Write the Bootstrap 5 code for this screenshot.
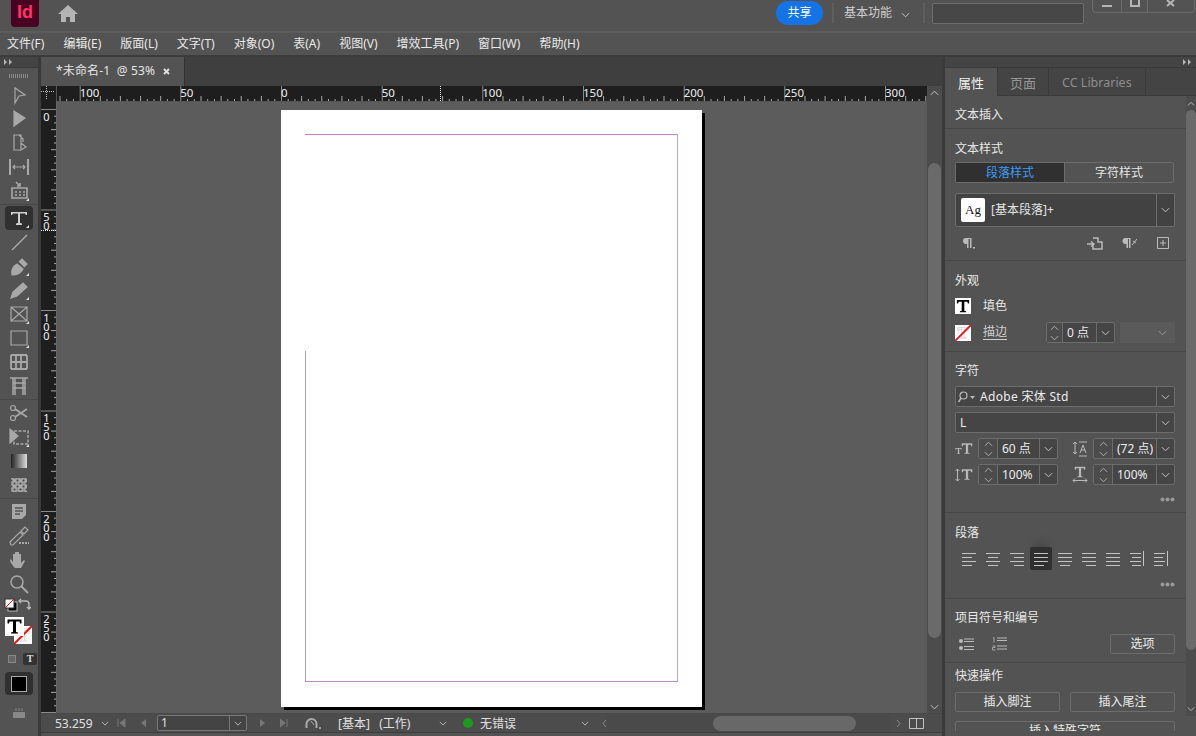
<!DOCTYPE html>
<html lang="zh-CN">
<head>
<meta charset="UTF-8" />
<title>Adobe InDesign</title>
<link href="https://cdn.jsdelivr.net/npm/bootstrap@5.3.0/dist/css/bootstrap.min.css" rel="stylesheet" />
<style>
  html, body { height: 100%; overflow: hidden; }
  body {
    background: #535353; color: #e4e4e4;
    font-family: "Noto Sans", "Noto Sans CJK SC", sans-serif; font-size: 12px; line-height: 1.2;
  }
  svg { display: block; flex: none; }
  .svg-defs { position: absolute; }
  .ic { fill: none; stroke: #a8a8a8; stroke-width: 1.2; }
  .app { width: 1196px; height: 736px; }
  /* spacing helpers for the fixed pixel gaps of this UI */
  .ml5 { margin-left: 5px; } .ml7 { margin-left: 7px; } .ml8 { margin-left: 8px; } .ml11 { margin-left: 11px; }
  .ml12 { margin-left: 12px; } .ml13 { margin-left: 13px; } .ml14 { margin-left: 14px; } .ml15 { margin-left: 15px; }
  .ml16 { margin-left: 16px; } .ml17 { margin-left: 17px; } .ml18 { margin-left: 18px; } .ml19 { margin-left: 19px; }
  .ml6 { margin-left: 6px; } .ml111 { margin-left: 111px; }
  .mt5 { margin-top: 5px; } .mt7 { margin-top: 7px; } .mt8 { margin-top: 8px; } .mt9 { margin-top: 9px; }
  .mt6 { margin-top: 6px; } .mt10 { margin-top: 10px; } .mt12 { margin-top: 12px; }
  /* title + menu */
  .title-bar { height: 31px; flex: none; }
  .id-logo {
    width: 28px; height: 27px; margin-left: 11px; background: #49021f; color: #ff3366; flex: none;
    border-radius: 0 0 4px 4px; font: 700 18px/25px "Liberation Sans", sans-serif; text-align: center;
  }
  .home-ic { margin: 5px 0 0 19px; }
  .share-btn {
    width: 47px; height: 24px; border-radius: 12px; background: #1473e6; color: #fff; font-size: 12px;
    border: 0; padding: 0; margin: 1px 0 0 698px;
  }
  .vsep { width: 2px; height: 20px; background: #5f5f5f; margin-top: 3px; }
  .vsep-a { margin-left: 9px; }
  .vsep-b { margin-left: 13px; }
  .workspace { margin: 5px 0 0 10px; width: 48px; color: #cfcfcf; line-height: 16px; white-space: nowrap; }
  .workspace-chev { margin: 12px 0 0 9px; }
  .search-box { width: 152px; height: 21px; background: #474747; border: 1px solid #6c6c6c; border-radius: 2px; margin: 3px 0 0 7px; }
  .win-btns { width: 103px; height: 13px; margin-left: 8px; border: 1px solid #6a6a6a; border-top: 0; border-radius: 0 0 4px 4px; }
  .win-btns > div { border-right: 1px solid #6a6a6a; }
  .win-btns > div:last-child { border-right: 0; }
  .win-min { width: 29px; }
  .win-max { width: 26px; }
  .win-close { width: 46px; }
  .menu-bar { height: 24px; flex: none; border-top: 2px solid #5c5c5c; padding-left: 7px; gap: 19px; box-shadow: 0 1px 0 #3c3c3c; }
  .menu-bar span { color: #e8e8e8; white-space: nowrap; }
  /* tool strip */
  .work { height: 680px; margin-top: 1px; border-top: 1px solid #3a3a3a; flex: none; }
  .tools { width: 38px; flex: none; background: #535353; }
  .strip-head { height: 11px; background: #444; border-bottom: 1px solid #3a3a3a; color: #b5b5b5; flex: none; }
  .grip { height: 4px; margin: 6px 9px 5px; background: repeating-linear-gradient(90deg, #8a8a8a 0 1px, transparent 1px 2px); flex: none; }
  .tool { height: 24px; flex: none; }
  .tool.on { background: #303030; border-radius: 4px; margin: 0 5px; }
  .tool-gap { height: 1px; background: #484848; margin: 1px 0 1px; flex: none; }
  .mini-row { padding: 2px 4px 0; height: 17px; }
  .swatch-row { height: 34px; margin-top: 4px; padding-left: 5px; }
  .mode-row { height: 16px; padding-left: 8px; gap: 7px; }
  .mode-t { width: 14px; height: 12px; background: #333; border-radius: 2px; color: #ddd; font: 700 10px/12px "Liberation Serif", serif; text-align: center; }
  .apply-box { height: 23px; margin: 5px 5px 0; background: #303030; border-radius: 4px; }
  .screen-mode { margin-top: 12px; }
  .divider-v { width: 3px; flex: none; background: #3a3a3a; }
  /* document */
  .doc { width: 901px; flex: none; }
  .doc-tabs { height: 29px; background: #3f3f3f; flex: none; }
  .doc-tab { width: 144px; background: #535353; padding-left: 15px; gap: 8px; border-right: 1px solid #333; color: #e4e4e4; letter-spacing: .15px; }
  .ruler-row { height: 15px; flex: none; }
  .ruler-corner { width: 16px; background: #1e1e1e; border-right: 1px solid #555; flex: none; }
  .ruler-h { width: 870px; background: #1e1e1e; flex: none; }
  .scroll-v { width: 15px; background: #4c4c4c; flex: none; }
  .scroll-mid { padding-top: 62px; }
  .flip { transform: scaleY(-1); }
  .doc-mid { height: 612px; flex: none; }
  .ruler-v { width: 16px; background: #1e1e1e; border-right: 1px solid #666; flex: none; height: 611px; }
  .ruler-v svg { overflow: visible; }
  .ruler-v text { text-orientation: upright; letter-spacing: -6px; }
  .canvas-area { width: 870px; background: #5c5c5c; position: relative; flex: none; border-top: 1px solid #555; }
  .page-sheet {
    position: absolute; left: 224px; top: 8px; width: 421px; height: 597px; background: #fff;
    box-shadow: 3px 3px 0 #000;
  }
  .guide-top { position: absolute; left: 24px; top: 24px; width: 373px; height: 1px; background: #c97fc2; }
  .guide-right { position: absolute; left: 396px; top: 24px; width: 1px; height: 548px; background: #c9a6c9; }
  .guide-bottom { position: absolute; left: 24px; top: 571px; width: 373px; height: 1px; background: #b98cc0; }
  .guide-left { position: absolute; left: 24px; top: 241px; width: 1px; height: 330px; background: #a59be0; }
  .thumb-v { width: 13px; height: 475px; margin: 0 auto; background: #6a6a6a; border-radius: 7px; flex: none; }
  .thumb-end { margin-top: 66px; }
  .status-bar { height: 20px; flex: none; background: #4c4c4c; color: #e0e0e0; border-top: 1px solid #484848; border-bottom: 1px solid #3e3e3e; white-space: nowrap; }
  .status-bar > span { padding-top: 2px; }
  .st-zoom { width: 46px; margin-left: 14px; }
  .page-pick { width: 90px; height: 16px; margin-left: 11px; border: 1px solid #777; border-radius: 2px; background: #444; }
  .page-pick span { width: 71px; padding-left: 3px; line-height: 14px; }
  .page-pick div { width: 17px; height: 14px; border-left: 1px solid #777; }
  .st-mode { width: 101px; margin-left: 16px; }
  .ok-dot { width: 10px; height: 10px; border-radius: 50%; background: #1c9a1c; margin-left: 16px; }
  .st-ok { width: 101px; margin-left: 7px; }
  .h-track { width: 283px; height: 18px; background: #4a4a4a; }
  .h-thumb { width: 143px; height: 15px; border-radius: 8px; background: #686868; margin-left: 106px; }
  /* right panel */
  .panel-wrap { width: 251px; flex: none; }
  .panel-tabs { height: 28px; background: #444; border-bottom: 1px solid #3a3a3a; flex: none; color: #969696; font-size: 13px; }
  .panel-tabs > div { border-right: 1px solid #3a3a3a; padding: 0 12px; height: 28px; line-height: 30px; white-space: nowrap; }
  .panel-tabs .act { background: #535353; color: #f0f0f0; margin-bottom: -1px; padding: 0 13px; }
  .panel-tabs .lib { font-size: 12.5px; color: #8e8e8e; padding: 0 13px; }
  .panel-body { width: 241px; height: 635px; overflow: hidden; flex: none; }
  .panel-scroll { width: 10px; background: #4c4c4c; flex: none; height: 620px; padding-top: 5px; }
  .panel-thumb { height: 540px; margin-top: 3px; background: #6a6a6a; border-radius: 5px; flex: none; }
  .panel-end { margin-top: 56px; }
  .sect { padding: 0 11px 0 10px; border-bottom: 1px solid #484848; }
  .sec-insert { height: 33px; padding-top: 12px; }
  .sec-style { height: 132px; padding-top: 13px; }
  .sec-look { height: 91px; padding-top: 13px; }
  .sec-char { height: 161px; padding-top: 12px; }
  .sec-para { height: 86px; padding-top: 13px; }
  .sec-list { height: 64px; padding-top: 12px; }
  .sec-quick { padding-top: 6px; border: 0; }
  .sect-title { line-height: 14px; color: #e8e8e8; }
  .seg { height: 21px; border: 1px solid #6c6c6c; border-radius: 2px; width: 219px; }
  .seg div { flex: 1; text-align: center; line-height: 20px; }
  .seg .act { background: #303030; color: #3d9bf5; border-right: 1px solid #6c6c6c; }
  .style-box { height: 34px; width: 220px; border: 1px solid #6c6c6c; border-radius: 2px; background: #424242; }
  .ag { width: 24px; height: 24px; background: #fff; color: #111; border-radius: 2px; margin: 0 6px 0 5px; font: 13px/23px "Liberation Serif", serif; text-align: center; flex: none; }
  .style-actions { padding: 0 5px 0 7px; }
  .fill-row { height: 16px; }
  .stroke-row { height: 21px; }
  .drop { width: 18px; border-left: 1px solid #6c6c6c; align-self: stretch; flex: none; }
  .inp { height: 21px; border: 1px solid #6c6c6c; border-radius: 2px; background: #454545; }
  .inp .arrows { width: 19px; border-right: 1px solid #6c6c6c; background: #4c4c4c; align-self: stretch; flex: none; }
  .inp .val { flex: 1; padding-left: 4px; white-space: nowrap; line-height: 19px; color: #ececec; }
  .w220 { width: 220px; }
  .w80 { width: 80px; }
  .w82 { width: 82px; }
  .w69 { width: 69px; margin-left: auto; margin-right: 5px; }
  .w69 .arrows { width: 16px; }
  .font-val { letter-spacing: .3px; }
  .search-ic { margin-left: 2px; }
  .ghost-sel { width: 55px; height: 21px; background: #5a5a5a; }
  .dim { opacity: .6; }
  .fill-link { text-decoration: underline; color: #cfcfcf; text-underline-offset: 3px; }
  .al-row { gap: 2px; padding-left: 3px; }
  .al-on { background: #303030; border-radius: 2px; box-shadow: 0 -8px 9px -5px #444; }
  .al-btn { width: 22px; height: 23px; }
  .plain-btn { height: 20px; border: 1px solid #6c6c6c; border-radius: 2px; background: transparent; color: #ececec; font-size: 12px; padding: 0; line-height: 18px; }
  .btn-opt { width: 65px; }
  .btn-half { width: 105px; }
  .btn-full { width: 220px; }
  .quick-row { gap: 10px; }
</style>
</head>
<body>
<svg class="svg-defs" width="0" height="0">
  <defs>
    <symbol id="chev" viewBox="0 0 10 6"><path d="M1 1l4 4 4-4" fill="none" stroke="#c4c4c4" stroke-width="1.1" /></symbol>
    <symbol id="updown" viewBox="0 0 10 17"><path d="M1 5l4-4 4 4M1 12l4 4 4-4" fill="none" stroke="#b8b8b8" stroke-width="1" /></symbol>
    <symbol id="bigT" viewBox="0 0 16 16"><path d="M1 5V1h14v4h-1.500L13 3H9.500v10.500L11.500 14v1h-7v-1l2-.5V3H3L2.500 5z" /></symbol>
    <symbol id="dots" viewBox="0 0 15 5"><circle cx="2.500" cy="2.500" r="2" fill="#999" /><circle cx="7.500" cy="2.500" r="2" fill="#999" /><circle cx="12.500" cy="2.500" r="2" fill="#999" /></symbol>
  </defs>
</svg>

<div class="app d-flex flex-column">
  <div class="title-bar d-flex align-items-start">
    <div class="id-logo">Id</div>
    <svg class="home-ic" width="20" height="17" viewBox="0 0 20 17"><path d="M10 0L0 9h3v8h5v-5h4v5h5V9h3z" fill="#b4b4b4" /></svg>
    <button class="share-btn" type="button">共享</button>
    <div class="vsep vsep-a"></div>
    <div class="workspace">基本功能</div>
    <svg class="workspace-chev" width="9" height="6"><use href="#chev" /></svg>
    <div class="vsep vsep-b"></div>
    <div class="search-box"></div>
    <div class="win-btns d-flex">
      <div class="win-min d-flex justify-content-center"><svg width="10" height="12"><rect y="5" width="10" height="2" fill="#b5b5b5" /></svg></div>
      <div class="win-max d-flex justify-content-center"><svg width="10" height="12"><rect x="1" y="-2" width="8" height="8" fill="none" stroke="#b5b5b5" stroke-width="2" /></svg></div>
      <div class="win-close d-flex justify-content-center"><svg width="10" height="12"><path d="M1 0l7 6M8 0L1 6" stroke="#b5b5b5" stroke-width="2" /></svg></div>
    </div>
  </div>

  <div class="menu-bar d-flex align-items-center">
    <span>文件(F)</span><span>编辑(E)</span><span>版面(L)</span><span>文字(T)</span><span>对象(O)</span><span>表(A)</span><span>视图(V)</span><span>增效工具(P)</span><span>窗口(W)</span><span>帮助(H)</span>
  </div>

  <div class="work d-flex">
    <div class="tools d-flex flex-column">
      <div class="strip-head ps-1 d-flex align-items-center"><svg width="9" height="6"><path d="M0 0l3 3-3 3zM5 0l3 3-3 3z" fill="#b5b5b5" /></svg></div>
      <div class="grip"></div>
      <div id="toolList" class="d-flex flex-column"></div>
    </div>
    <div class="divider-v"></div>

    <div class="doc d-flex flex-column">
      <div class="doc-tabs d-flex">
        <div class="doc-tab d-flex align-items-center"><span>*未命名-1&nbsp; @ 53%</span><svg width="7" height="7"><path d="M1 1l5 5M6 1L1 6" stroke="#ddd" stroke-width="2" /></svg></div>
      </div>
      <div class="ruler-row d-flex">
        <div class="ruler-corner"><svg width="15" height="15"><path d="M0 5.500h13M5.500 0v13" stroke="#bbb" stroke-dasharray="1 1" /></svg></div>
        <div class="ruler-h" id="rulerH"></div>
        <div class="scroll-v d-flex justify-content-center pt-1"><svg class="flip" width="9" height="6"><use href="#chev" /></svg></div>
      </div>
      <div class="doc-mid d-flex">
        <div class="ruler-v" id="rulerV"></div>
        <div class="canvas-area">
          <div class="page-sheet">
            <div class="guide-top"></div><div class="guide-right"></div><div class="guide-bottom"></div><div class="guide-left"></div>
          </div>
        </div>
        <div class="scroll-v scroll-mid d-flex flex-column">
          <div class="thumb-v"></div>
          <svg class="mx-auto thumb-end" width="9" height="6"><use href="#chev" /></svg>
        </div>
      </div>
      <div class="status-bar d-flex align-items-center">
        <span class="st-zoom">53.259</span>
        <svg width="8" height="5"><use href="#chev" /></svg>
        <svg class="ml8" width="9" height="8"><path d="M1 0v8M8 0v8L3 4z" fill="#777" stroke="#777" /></svg>
        <svg class="ml15" width="5" height="8"><path d="M5 0v8L0 4z" fill="#777" /></svg>
        <div class="page-pick d-flex"><span>1</span><div class="d-flex align-items-center justify-content-center"><svg width="8" height="5"><use href="#chev" /></svg></div></div>
        <svg class="ml13" width="5" height="8"><path d="M0 0v8l5-4z" fill="#777" /></svg>
        <svg class="ml15" width="8" height="8"><path d="M7 0v8M0 0v8l5-4z" fill="#777" stroke="#777" /></svg>
        <svg class="ml17" width="17" height="13"><path d="M1.500 11V7a5 5 0 0 1 10 0v4" fill="none" stroke="#aaa" stroke-width="2" /><path d="M6 4l3 4" stroke="#aaa" /><rect x="14" y="10" width="2" height="2" fill="#999" /></svg>
        <span class="st-mode">[基本]&nbsp;&nbsp;&nbsp;(工作)</span>
        <svg width="8" height="5"><use href="#chev" /></svg>
        <div class="ok-dot"></div>
        <span class="st-ok">无错误</span>
        <svg width="8" height="5"><use href="#chev" /></svg>
        <svg class="ml13" width="5" height="9"><path d="M4 1L1 4.500 4 8" fill="none" stroke="#888" /></svg>
        <div class="h-track d-flex align-items-center"><div class="h-thumb"></div></div>
        <svg class="ml6" width="5" height="9"><path d="M1 1l3 3.500L1 8" fill="none" stroke="#888" /></svg>
        <svg class="ml8" width="15" height="11"><path d="M.5.500h14v10H.5zM7.500.500v10" fill="none" stroke="#c0c0c0" /></svg>
      </div>
    </div>
    <div class="divider-v"></div>

    <div class="panel-wrap d-flex flex-column">
      <div class="strip-head d-flex align-items-center justify-content-end pe-1"><svg width="9" height="6"><path d="M0 0l3 3-3 3zM5 0l3 3-3 3z" fill="#b5b5b5" /></svg></div>
      <div class="panel-tabs d-flex">
        <div class="act">属性</div><div>页面</div><div class="lib">CC Libraries</div>
      </div>
      <div class="d-flex">
        <div class="panel-body">
          <section class="sect sec-insert"><div class="sect-title">文本插入</div></section>

          <section class="sect sec-style">
            <div class="sect-title">文本样式</div>
            <div class="seg d-flex mt6"><div class="act">段落样式</div><div>字符样式</div></div>
            <div class="style-box d-flex align-items-center mt10">
              <div class="ag">Ag</div>
              <span class="flex-fill">[基本段落]+</span>
              <div class="drop d-flex align-items-center justify-content-center"><svg width="9" height="6"><use href="#chev" /></svg></div>
            </div>
            <div class="style-actions d-flex align-items-center mt9">
              <svg width="14" height="12"><path d="M7.500 1H4a3 3 0 0 0 0 6h1v4h1.500V2H8v9h1.500V1z" fill="#bbb" /><rect x="11" y="10" width="2" height="1.500" fill="#bbb" /></svg>
              <svg class="ml111" width="17" height="14"><path d="M6 2h5v4h4v7H6v-4" fill="none" stroke="#bbb" stroke-width="1.500" /><path d="M0 8h6M4 5.500L7 8l-3 2.500" fill="none" stroke="#bbb" stroke-width="1.300" /></svg>
              <svg class="ml18" width="16" height="12"><path d="M6.500 1H3.500a3 3 0 0 0 0 6h1v4H6V2h1v9h1.500V1z" fill="#bbb" /><path d="M10 8l5-6M11 4l3 2" stroke="#bbb" /></svg>
              <svg class="ml19" width="12" height="12"><path d="M.5.500h11v11H.5zM3 6h6M6 3v6" fill="none" stroke="#bbb" /></svg>
            </div>
          </section>

          <section class="sect sec-look">
            <div class="sect-title">外观</div>
            <div class="fill-row d-flex align-items-center mt10">
              <svg width="16" height="16"><rect width="16" height="16" fill="#fff" /><use href="#bigT" width="14" height="14" x="1" y="1" fill="#000" /></svg>
              <span class="ml12">填色</span>
            </div>
            <div class="stroke-row d-flex align-items-center mt8">
              <svg width="16" height="16"><rect width="16" height="16" fill="#fff" /><use href="#bigT" width="12" height="12" x="2" y="2" fill="none" stroke="#bbb" stroke-width=".8" /><path d="M0 16L16 0" stroke="#e11" stroke-width="1.800" /></svg>
              <span class="fill-link ml12">描边 </span>
              <div class="inp d-flex align-items-center w69">
                <div class="arrows d-flex align-items-center justify-content-center"><svg width="9" height="16"><use href="#updown" /></svg></div>
                <div class="val">0 点</div>
                <div class="drop d-flex align-items-center justify-content-center"><svg width="9" height="6"><use href="#chev" /></svg></div>
              </div>
              <div class="ghost-sel d-flex align-items-center justify-content-end pe-2"><svg class="dim" width="9" height="6"><use href="#chev" /></svg></div>
            </div>
          </section>

          <section class="sect sec-char">
            <div class="sect-title">字符</div>
            <div class="inp w220 d-flex align-items-center mt8">
              <svg class="search-ic" width="18" height="12"><circle cx="5.500" cy="4.500" r="3.500" fill="none" stroke="#bbb" stroke-width="1.200" /><path d="M3 7L.5 11" stroke="#bbb" stroke-width="1.500" /><path d="M12 5h5l-2.500 3z" fill="#bbb" /></svg>
              <div class="val font-val">Adobe 宋体 Std</div>
              <div class="drop d-flex align-items-center justify-content-center"><svg width="9" height="6"><use href="#chev" /></svg></div>
            </div>
            <div class="inp w220 d-flex align-items-center mt5">
              <div class="val">L</div>
              <div class="drop d-flex align-items-center justify-content-center"><svg width="9" height="6"><use href="#chev" /></svg></div>
            </div>
            <div class="d-flex align-items-center mt5">
              <svg width="18" height="14" viewBox="0 0 18 14"><use href="#bigT" x="6" y="0" width="12" height="13" fill="#b8b8b8" /><use href="#bigT" x="0" y="5" width="7" height="8" fill="#b8b8b8" /></svg>
              <div class="inp d-flex align-items-center w80 ml5">
                <div class="arrows d-flex align-items-center justify-content-center"><svg width="9" height="16"><use href="#updown" /></svg></div>
                <div class="val">60 点</div>
                <div class="drop d-flex align-items-center justify-content-center"><svg width="9" height="6"><use href="#chev" /></svg></div>
              </div>
              <svg class="ml14" width="16" height="16"><path d="M3 1v12M1 3l2-2 2 2M1 11l2 2 2-2" fill="none" stroke="#b8b8b8" /><path d="M7 1h8M7 15h8" stroke="#b8b8b8" /><path d="M8 12l3-8 3 8M9 9h4" fill="none" stroke="#b8b8b8" /></svg>
              <div class="inp d-flex align-items-center w82 ml5">
                <div class="arrows d-flex align-items-center justify-content-center"><svg width="9" height="16"><use href="#updown" /></svg></div>
                <div class="val">(72 点)</div>
                <div class="drop d-flex align-items-center justify-content-center"><svg width="9" height="6"><use href="#chev" /></svg></div>
              </div>
            </div>
            <div class="d-flex align-items-center mt5">
              <svg width="18" height="14" viewBox="0 0 18 14"><path d="M2.500 1v12M.5 3l2-2 2 2M.5 11l2 2 2-2" fill="none" stroke="#b8b8b8" /><use href="#bigT" x="6" y="0" width="12" height="13" fill="#b8b8b8" /></svg>
              <div class="inp d-flex align-items-center w80 ml5">
                <div class="arrows d-flex align-items-center justify-content-center"><svg width="9" height="16"><use href="#updown" /></svg></div>
                <div class="val">100%</div>
                <div class="drop d-flex align-items-center justify-content-center"><svg width="9" height="6"><use href="#chev" /></svg></div>
              </div>
              <svg class="ml14" width="16" height="17"><use href="#bigT" x="2" y="0" width="12" height="12" fill="#b8b8b8" /><path d="M1 14.500h14M3 12.500l-2 2 2 2M13 12.500l2 2-2 2" fill="none" stroke="#b8b8b8" /></svg>
              <div class="inp d-flex align-items-center w82 ml5">
                <div class="arrows d-flex align-items-center justify-content-center"><svg width="9" height="16"><use href="#updown" /></svg></div>
                <div class="val">100%</div>
                <div class="drop d-flex align-items-center justify-content-center"><svg width="9" height="6"><use href="#chev" /></svg></div>
              </div>
            </div>
            <div class="d-flex justify-content-end mt12"><svg width="15" height="5"><use href="#dots" /></svg></div>
          </section>

          <section class="sect sec-para">
            <div class="sect-title">段落</div>
            <div class="al-row d-flex mt7" id="alignRow"></div>
            <div class="d-flex justify-content-end mt12"><svg width="15" height="5"><use href="#dots" /></svg></div>
          </section>

          <section class="sect sec-list">
            <div class="sect-title">项目符号和编号</div>
            <div class="d-flex align-items-center mt9">
              <svg class="ms-1" width="15" height="13"><circle cx="2" cy="3" r="2" fill="#bbb" /><circle cx="2" cy="10" r="2" fill="#bbb" /><path d="M5 1h10M5 3.500h10M5 8.500h10M5 11.500h10" stroke="#bbb" /></svg>
              <svg class="ml18" width="15" height="14"><path d="M1 1l1-.5v5M.5 9h2.500v1.500H.5V13H3.500" fill="none" stroke="#aaa" stroke-width=".9" /><path d="M5 1h10M5 3.500h10M5 9h10M5 12h10" stroke="#bbb" /></svg>
              <button class="plain-btn btn-opt ms-auto" type="button">选项</button>
            </div>
          </section>

          <section class="sect sec-quick">
            <div class="sect-title">快速操作</div>
            <div class="quick-row d-flex mt9">
              <button class="plain-btn btn-half" type="button">插入脚注</button>
              <button class="plain-btn btn-half" type="button">插入尾注</button>
            </div>
            <button class="plain-btn btn-full mt9" type="button">插入特殊字符</button>
          </section>
        </div>
        <div class="panel-scroll d-flex flex-column align-items-center">
          <svg class="flip" width="8" height="6"><use href="#chev" /></svg>
          <div class="panel-thumb w-100"></div>
          <svg class="panel-end" width="8" height="6"><use href="#chev" /></svg>
        </div>
      </div>
    </div>
  </div>
</div>

<script>
  // tool strip, rulers and align row are repetitive, so build them here
  const tri = '<path d="M22 22v-3l-3 3z" fill="#ddd" stroke="none"/>';
  const T = '<path d="M4 9V6h16v3h-1l-1-1.500h-5V17l2 .6V19H9v-1.400l2-.6V7.500H6L5 9z" fill="#cfcfcf" stroke="none"/>';
  const tools = [
    '<path d="M8 5v15l4-7 6-1z"/>',
    '<path d="M7 4v15l11-8z" fill="#a8a8a8"/>',
    '<path d="M14 12V4H7v15h7M12 4l4 4v3M14 12v7l5-3z"/>',
    '<path d="M3 4v16M21 4v16" stroke-width="2"/><path d="M6 12h12M8 10l-2 2 2 2M16 10l2 2-2 2"/>',
    '<path d="M5 9h15v10H5zM9 3l4 4M13 4v3h-3M8 13h2M12 13h2M16 13h2M8 16h2M12 16h2M16 16h2" stroke-width="1.600"/>' + tri,
    'sep',
    T + tri,
    '<path d="M5 20L20 5" stroke-width="1.500"/>',
    '<path d="M5 21c-1-6 1-9 5-11l6 5c-2 4-5 6-11 6zM12 8l3-3 5 5-3 3" fill="#a8a8a8"/>' + tri,
    '<path d="M4 20l2-6L16 5l4 4-10 9z" fill="#a8a8a8"/>' + tri,
    '<path d="M4 5h16v14H4zM4 5l16 14M20 5L4 19" stroke-width="1.200"/>' + tri,
    '<path d="M4 5h16v14H4z"/>' + tri,
    '<path d="M4 5h16M4 12h16M4 19h16M4 5v14M9 5v14M14 5v14M20 5v14" stroke-width="1.800"/>',
    '<path d="M3 4h18M8 4v17M16 4v17M6 4v17M18 4v17M6 9h12M6 14h12" stroke-width="1.500"/>',
    'sep',
    '<circle cx="6" cy="7" r="2.500"/><circle cx="6" cy="17" r="2.500"/><path d="M8 8l12 8M8 16l12-8" stroke-width="1.800"/>',
    '<path d="M3 4v14l8-7z" fill="#a8a8a8"/><path d="M7 6h14v13H7z" stroke-dasharray="3 1.500" stroke-width="1.500"/>' + tri,
    '<defs><linearGradient id="gr"><stop stop-color="#222"/><stop offset="1" stop-color="#ddd"/></linearGradient></defs><rect x="4" y="5" width="16" height="14" fill="url(#gr)" stroke="none"/>',
    '<defs><pattern id="ck" width="6" height="6" patternUnits="userSpaceOnUse"><rect width="6" height="6" fill="#444"/><rect width="3" height="3" fill="#aaa"/><rect x="3" y="3" width="3" height="3" fill="#888"/></pattern></defs><rect x="4" y="5" width="16" height="14" fill="url(#ck)" stroke="none"/>',
    'sep',
    '<path d="M5 4h14v11l-4 4H5z" fill="#a8a8a8" stroke="none"/><path d="M8 8h8M8 11h8M8 14h5" stroke="#535353" stroke-width="1.300"/>',
    '<path d="M4 21l-1-3L13 8l3 3L6 21zM14 7l4-4 3 3-4 4z"/><path d="M12 19h10" stroke-dasharray="2 1" stroke-width="2"/>',
    '<path d="M8 20c-2-2-5-6-5-8s2 0 3 2V6h2v6-8h2v8-8h2v8-6h2v9l3-3 1 1-4 7z" fill="#a8a8a8" stroke="none"/>',
    '<circle cx="10" cy="10" r="6" stroke-width="1.500"/><path d="M14 14l7 7" stroke-width="2"/>'
  ];
  const toolHtml = tools.map((t, i) => {
    if (t === 'sep') return '<div class="tool-gap"></div>';
    const on = i === 6 ? ' on' : '';
    return `<div class="tool${on} d-flex justify-content-center align-items-center"><svg class="ic" width="24" height="24" viewBox="0 0 24 24">${t}</svg></div>`;
  }).join('');
  const lower = `
    <div class="mini-row d-flex justify-content-between">
      <svg width="14" height="14"><rect x="4" y="4" width="9" height="9" fill="#000" stroke="#bbb"/><rect x="1" y="1" width="9" height="9" fill="#fff" stroke="#333"/><path d="M1 10L10 1" stroke="#e11"/></svg>
      <svg width="13" height="13" class="me-1"><path d="M1 3h7a3 3 0 0 1 3 3v5M3 1L1 3l2 2M9 9l2 2 2-2" fill="none" stroke="#b8b8b8" stroke-width="1.400"/></svg>
    </div>
    <div class="swatch-row">
      <svg width="28" height="28"><rect x="9" y="9" width="18" height="18" fill="#fff"/><use href="#bigT" x="11" y="11" width="14" height="14" fill="none" stroke="#bbb" stroke-width=".6"/><path d="M9 27L27 9" stroke="#e11" stroke-width="2"/><rect width="19" height="19" fill="#fff"/><use href="#bigT" x="1.500" y="1.500" width="16" height="16" fill="#000"/></svg>
    </div>
    <div class="mode-row d-flex align-items-center">
      <svg width="8" height="8"><rect x=".5" y=".5" width="7" height="7" fill="#666" stroke="#888"/></svg>
      <div class="mode-t">T</div>
    </div>
    <div class="apply-box d-flex justify-content-center align-items-center">
      <svg width="16" height="16"><rect x=".5" y=".5" width="15" height="15" fill="#000" stroke="#aaa"/></svg>
    </div>
    <div class="screen-mode d-flex justify-content-center">
      <svg width="16" height="12"><path d="M2 5h12v6H2z" fill="#888"/><path d="M5 1v3M8 1v3M11 1v3" stroke="#888"/></svg>
    </div>`;
  document.getElementById('toolList').innerHTML = toolHtml + lower;

  // rulers: 50 units = 100.67px, a small tick every 3.33 units
  const step = 100.67 / 15;
  let h = '<svg width="870" height="15">';
  for (let i = -36; i <= 100; i++) {
    const x = 224.5 + i * step;
    if (x < 0 || x > 870) continue;
    const major = i % 15 === 0, mid = i % 3 === 0;
    const len = major ? 15 : mid ? 5 : 2;
    h += `<path d="M${x.toFixed(1)} ${15 - len}V15" stroke="${major ? '#8a8a8a' : '#a8a8a8'}"/>`;
    if (major) h += `<text x="${(x - 0.5).toFixed(1)}" y="10.500" fill="#eee" font-size="11.500" font-family="Noto Sans, sans-serif">${Math.abs(i) * 10 / 3}</text>`;
  }
  h += '<path d="M383.500 0V15" stroke="#fff" stroke-dasharray="1 1"/></svg>';
  document.getElementById('rulerH').innerHTML = h;

  let v = '<svg width="15" height="611">';
  for (let i = 0; i <= 90; i++) {
    const y = 8.5 + i * (100.5 / 15);
    const major = i % 15 === 0, mid = i % 3 === 0;
    const len = major ? 15 : mid ? 5 : 2;
    v += `<path d="M${15 - len} ${y.toFixed(1)}H15" stroke="${major ? '#8a8a8a' : '#a8a8a8'}"/>`;
    if (major && i < 90) {
      // digits run top to bottom in the side ruler
      v += `<text x="5.500" y="${(y - 1).toFixed(1)}" writing-mode="vertical-rl" fill="#eee" font-size="11" font-family="Noto Sans, sans-serif">${i * 10 / 3}</text>`;
    }
  }
  v += '<path d="M0 129.500H15" stroke="#fff" stroke-dasharray="1 1"/></svg>';
  document.getElementById('rulerV').innerHTML = v;

  // paragraph align buttons: each row is [x1, x2] for 4 lines
  const al = [
    [[1,15],[1,11],[1,15],[1,11]], [[1,15],[3,13],[1,15],[3,13]], [[1,15],[5,15],[1,15],[5,15]],
    [[1,15],[1,15],[1,15],[1,11]], [[1,15],[1,15],[1,15],[3,13]], [[1,15],[1,15],[1,15],[5,15]],
    [[1,15],[1,15],[1,15],[1,15]], [[1,12],[3,12],[1,12],[3,12]], [[1,12],[1,10],[1,12],[1,10]]
  ];
  document.getElementById('alignRow').innerHTML = al.map((rows, i) => {
    const lines = rows.map((r, k) => `M${r[0]} ${k * 4 + 2.5}H${r[1]}`).join('');
    const bar = i > 6 ? '<path d="M14.500 0V15" stroke="#c4c4c4"/>' : '';
    return `<div class="al-btn d-flex justify-content-center align-items-center ${i === 3 ? 'al-on' : ''}"><svg width="16" height="15"><path d="${lines}" stroke="#c4c4c4"/>${bar}</svg></div>`;
  }).join('');
</script>
<script src="https://cdn.jsdelivr.net/npm/bootstrap@5.3.0/dist/js/bootstrap.bundle.min.js"></script>
</body>
</html>
